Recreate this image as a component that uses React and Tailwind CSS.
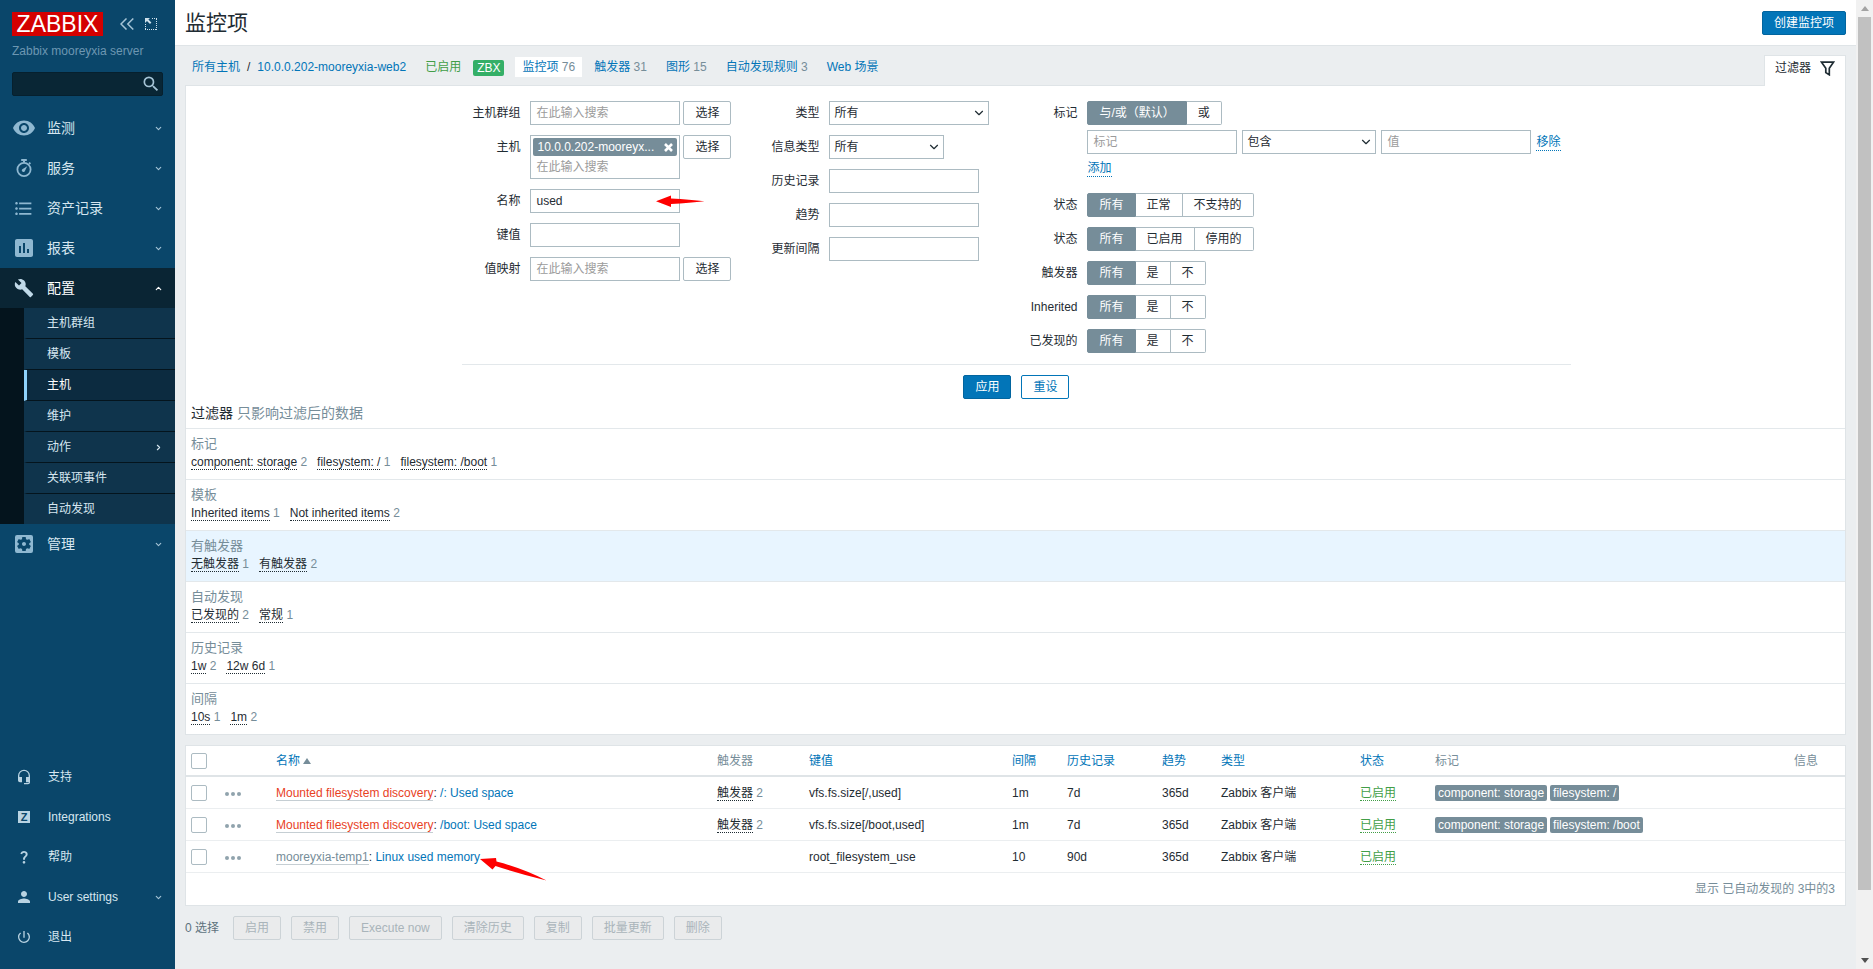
import { useId } from "react";
import { ChevronDown, ChevronRight, ChevronUp } from "lucide-react";
import {
    MdAssessment,
    MdBuild,
    MdFormatListBulleted,
    MdHeadsetMic,
    MdPerson,
    MdPowerSettingsNew,
    MdQuestionMark,
    MdRemoveRedEye,
    MdSearch,
    MdSettingsApplications,
} from "react-icons/md";

const StopwatchIcon = () => (
    <svg width="16" height="18" viewBox="0 0 16 18" fill="none" stroke="currentColor">
        <circle cx="8" cy="10.5" r="6.6" strokeWidth="1.8" />
        <path d="M5.2 1h5.6M8 1v2.5" strokeWidth="2" />
        <path d="M13 3.6l1.4 1.4" strokeWidth="1.8" />
        <path d="M11.2 7.2L8.9 12a1.6 1.6 0 1 1-2.2-2z" fill="currentColor" stroke="none" />
    </svg>
);

const CollapseIcon = () => (
    <svg width="14" height="12" viewBox="0 0 14 12" fill="none" stroke="currentColor" strokeWidth="1.5">
        <path d="M6.5 0.5L1 6l5.5 5.5M13.3 0.5L7.8 6l5.5 5.5" />
    </svg>
);

const KioskIcon = () => (
    <svg width="12" height="12" viewBox="0 0 12 12" fill="none" stroke="currentColor">
        <path d="M7 0.5h5M11.5 1v11M11 11.5H0M0.5 11V6" strokeDasharray="1 1" />
        <path d="M0 0h5L3.4 1.6 6.4 4.6 5 6 2 3 0 5z" fill="currentColor" stroke="none" />
    </svg>
);

const FunnelIcon = () => (
    <svg width="15" height="15" viewBox="0 0 15 15" fill="none" stroke="#1f2c33" strokeWidth="1.7">
        <path d="M1.5 1.2h12L9.3 7.2v6.6L5.8 11.6V7.2z" />
    </svg>
);

const menu = [
    { label: "监测", icon: <MdRemoveRedEye size={24} /> },
    { label: "服务", icon: <StopwatchIcon /> },
    { label: "资产记录", icon: <MdFormatListBulleted size={21} /> },
    { label: "报表", icon: <MdAssessment size={24} /> },
    {
        label: "配置",
        icon: <MdBuild size={20} />,
        children: ["主机群组", "模板", "主机", "维护", "动作", "关联项事件", "自动发现"],
    },
    { label: "管理", icon: <MdSettingsApplications size={24} /> },
];

const userMenu = [
    { label: "支持", icon: <MdHeadsetMic size={16} /> },
    {
        label: "Integrations",
        icon: (
            <span className="w-3 h-3 bg-[#b9d3e2] text-[#0a466a] text-[11px] leading-3 font-bold text-center">Z</span>
        ),
    },
    { label: "帮助", icon: <MdQuestionMark size={16} /> },
    { label: "User settings", icon: <MdPerson size={18} />, arrow: true },
    { label: "退出", icon: <MdPowerSettingsNew size={16} /> },
];

const tabs = [
    { label: "监控项", count: 76, active: true },
    { label: "触发器", count: 31 },
    { label: "图形", count: 15 },
    { label: "自动发现规则", count: 3 },
    { label: "Web 场景" },
];

const subfilters = [
    { title: "标记", items: [["component: storage", 2], ["filesystem: /", 1], ["filesystem: /boot", 1]] },
    { title: "模板", items: [["Inherited items", 1], ["Not inherited items", 2]] },
    { title: "有触发器", items: [["无触发器", 1], ["有触发器", 2]], hover: true },
    { title: "自动发现", items: [["已发现的", 2], ["常规", 1]] },
    { title: "历史记录", items: [["1w", 2], ["12w 6d", 1]] },
    { title: "间隔", items: [["10s", 1], ["1m", 2]] },
];

const rows = [
    {
        parent: "Mounted filesystem discovery",
        name: "/: Used space",
        triggers: 2,
        itemKey: "vfs.fs.size[/,used]",
        interval: "1m",
        history: "7d",
        tags: ["component: storage", "filesystem: /"],
    },
    {
        parent: "Mounted filesystem discovery",
        name: "/boot: Used space",
        triggers: 2,
        itemKey: "vfs.fs.size[/boot,used]",
        interval: "1m",
        history: "7d",
        tags: ["component: storage", "filesystem: /boot"],
    },
    {
        parent: "mooreyxia-temp1",
        template: true,
        name: "Linux used memory",
        itemKey: "root_filesystem_use",
        interval: "10",
        history: "90d",
        tags: [],
    },
];

const Sidebar = () => (
    <aside className="w-[175px] shrink-0 min-h-screen bg-[#0a466a] flex flex-col">
        <div className="px-3 pt-3">
            <div className="flex items-center">
                <a href="#" className="w-[91px] h-6 bg-[#d40000] text-white text-[23px] leading-6 text-center">
                    ZABBIX
                </a>
                <button type="button" aria-label="Collapse" className="ml-[17px] text-[#a5c4d6]">
                    <CollapseIcon />
                </button>
                <button type="button" aria-label="Kiosk mode" className="ml-[11px] text-[#cfe1ec]">
                    <KioskIcon />
                </button>
            </div>
            <div className="mt-1.5 leading-[18px] text-[#6d97b2] whitespace-nowrap">Zabbix mooreyxia server</div>
            <form className="relative mt-3">
                <input
                    type="text"
                    aria-label="Search"
                    className="w-full h-6 pl-2 pr-7 rounded-xs bg-[#092635] border border-[#06202e] text-white"
                />
                <button type="button" aria-label="Search" className="absolute right-0.5 top-0.5 text-[#a5c4d6]">
                    <MdSearch size={20} />
                </button>
            </form>
        </div>

        <nav className="mt-3 text-sm text-[#d6e6f0]">
            {menu.map((item) => (
                <div key={item.label}>
                    <a
                        href="#"
                        className={`flex items-center h-10 pr-3 ${item.children ? "bg-[#0a2534] text-white" : ""}`}
                    >
                        <span
                            className={`w-[47px] flex justify-center items-center ${
                                item.children ? "text-[#c0d9e8]" : "text-[#8fb8d1]"
                            }`}
                        >
                            {item.icon}
                        </span>
                        <span className="flex-1">{item.label}</span>
                        {item.children ? (
                            <ChevronUp size={9} strokeWidth={3} />
                        ) : (
                            <ChevronDown size={9} strokeWidth={3} className="text-[#a5c4d6]" />
                        )}
                    </a>
                    {item.children && (
                        <div className="pl-6 bg-[#04141d] text-xs divide-y divide-[#04141d]">
                            {item.children.map((child) => (
                                <a
                                    key={child}
                                    href="#"
                                    className={`flex items-center justify-between box-content h-[30px] pr-3 border-l-[3px] pl-5 ${
                                        child === "主机"
                                            ? "bg-[#0c2b40] border-l-[#8fd2fb] text-white"
                                            : "bg-[#0f344c] border-l-[#0f344c]"
                                    }`}
                                >
                                    {child}
                                    {child === "动作" && <ChevronRight size={9} strokeWidth={3} />}
                                </a>
                            ))}
                        </div>
                    )}
                </div>
            ))}
        </nav>

        <nav className="mt-auto pb-3 text-[#d6e6f0]">
            {userMenu.map((item) => (
                <a key={item.label} href="#" className="flex items-center h-10 pr-3">
                    <span className="w-12 flex justify-center items-center text-[#b9d3e2]">{item.icon}</span>
                    <span className="flex-1">{item.label}</span>
                    {item.arrow && <ChevronDown size={9} strokeWidth={3} className="text-[#a5c4d6]" />}
                </a>
            ))}
        </nav>
    </aside>
);

const Field = ({ label, id, children }) => (
    <div className="flex gap-2.5">
        <label htmlFor={id} className="w-12 h-6 leading-6 shrink-0 flex justify-end whitespace-nowrap">
            {label}
        </label>
        {children}
    </div>
);

const TextBox = ({ id, placeholder, value, label }) => (
    <input
        id={id}
        type="text"
        aria-label={label}
        placeholder={placeholder}
        defaultValue={value}
        className="w-[150px] h-6 px-[5px] bg-white border border-[#acbbc2] placeholder:text-[#9b9b9b]"
    />
);

const SelectBox = ({ id, value, width, label }) => (
    <div className={`relative ${width}`}>
        <select
            id={id}
            aria-label={label}
            defaultValue={value}
            className="appearance-none w-full h-6 pl-1 pr-5 bg-white border border-[#acbbc2]"
        >
            <option>{value}</option>
        </select>
        <ChevronDown size={14} className="absolute right-[3px] top-[5px] pointer-events-none text-[#1f2c33]" />
    </div>
);

const PickButton = () => (
    <button type="button" className="ml-[3px] w-12 h-6 bg-white border border-[#acbbc2] rounded-xs">
        选择
    </button>
);

const PickField = ({ label }) => {
    const id = useId();
    return (
        <Field label={label} id={id}>
            <div className="flex">
                <TextBox id={id} placeholder="在此输入搜索" />
                <PickButton />
            </div>
        </Field>
    );
};

const TextField = ({ label, value }) => {
    const id = useId();
    return (
        <Field label={label} id={id}>
            <TextBox id={id} value={value} />
        </Field>
    );
};

const SelectField = ({ label, width }) => {
    const id = useId();
    return (
        <Field label={label} id={id}>
            <SelectBox id={id} value="所有" width={width} />
        </Field>
    );
};

const Segmented = ({ label, options }) => {
    const name = useId();
    return (
        <div role="radiogroup" aria-label={label} className="flex h-6">
            {options.map((option, i) => (
                <label
                    key={option}
                    className="relative px-[11px] leading-[22px] bg-white border border-l-0 border-[#acbbc2] first:border-l first:rounded-l-xs last:rounded-r-xs has-checked:bg-[#768d99] has-checked:border-[#768d99] has-checked:text-white"
                >
                    <input type="radio" name={name} defaultChecked={i === 0} className="sr-only" />
                    {option}
                </label>
            ))}
        </div>
    );
};

const RadioField = ({ label, options }) => (
    <div className="flex gap-2.5">
        <span className="w-12 h-6 leading-6 shrink-0 flex justify-end whitespace-nowrap">{label}</span>
        <Segmented label={label} options={options} />
    </div>
);

const dotted = "border-b border-dotted";

const Filter = () => (
    <section className="bg-white border border-[#dfe4e7] pt-[15px]">
        <form>
            <div className="w-fit mx-auto pl-0.5">
                <div className="flex items-start gap-10 px-2.5 pb-[11px]">
                    <div className="flex flex-col gap-2.5">
                        <PickField label="主机群组" />
                        <Field label="主机" id="host">
                            <div className="flex items-start">
                                <div className="w-[150px] border border-[#acbbc2] bg-white px-0.5 pt-0.5">
                                    <div className="flex items-center justify-between h-[18px] px-1 rounded-xs bg-[#768d99] text-white">
                                        <span className="leading-[18px]">10.0.0.202-mooreyx...</span>
                                        <button type="button" aria-label="Remove host">
                                            <svg width="9" height="9" viewBox="0 0 9 9" stroke="#fff" strokeWidth="2.6">
                                                <path d="M1 1l7 7M8 1L1 8" />
                                            </svg>
                                        </button>
                                    </div>
                                    <input
                                        id="host"
                                        type="text"
                                        placeholder="在此输入搜索"
                                        className="block w-full h-[22px] px-[3px] placeholder:text-[#9b9b9b]"
                                    />
                                </div>
                                <PickButton />
                            </div>
                        </Field>
                        <div className="relative">
                            <TextField label="名称" value="used" />
                            <svg
                                className="absolute left-[184px] top-1.5"
                                width="49"
                                height="12"
                                viewBox="0 0 49 12"
                                fill="#fe0000"
                            >
                                <path d="M0 6.2L15 0.5V3.5Q34 4.5 48.500 6.200Q34 8 15 9V12z" />
                            </svg>
                        </div>
                        <TextField label="键值" />
                        <PickField label="值映射" />
                    </div>

                    <div className="flex flex-col gap-2.5">
                        <SelectField label="类型" width="w-40" />
                        <SelectField label="信息类型" width="w-[115px]" />
                        <TextField label="历史记录" />
                        <TextField label="趋势" />
                        <TextField label="更新间隔" />
                    </div>

                    <div className="flex flex-col gap-2.5">
                        <div className="flex gap-2.5">
                            <span className="w-12 leading-6 text-right">标记</span>
                            <div>
                                <Segmented label="标记" options={["与/或（默认）", "或"]} />
                                <div className="flex items-center gap-[5px] mt-[5px]">
                                    <TextBox label="标记" placeholder="标记" />
                                    <SelectBox label="Operator" value="包含" width="w-[134px]" />
                                    <TextBox label="值" placeholder="值" />
                                    <button type="button" className={`text-[#0275b8] leading-4 ${dotted}`}>
                                        移除
                                    </button>
                                </div>
                                <button type="button" className={`block my-1.5 text-[#0275b8] leading-4 ${dotted}`}>
                                    添加
                                </button>
                            </div>
                        </div>
                        <RadioField label="状态" options={["所有", "正常", "不支持的"]} />
                        <RadioField label="状态" options={["所有", "已启用", "停用的"]} />
                        <RadioField label="触发器" options={["所有", "是", "不"]} />
                        <RadioField label="Inherited" options={["所有", "是", "不"]} />
                        <RadioField label="已发现的" options={["所有", "是", "不"]} />
                    </div>
                </div>
                <div className="flex justify-center gap-2.5 pt-2.5 border-t border-[#e3e8eb]">
                    <button type="button" className="w-12 h-6 rounded-xs bg-[#0275b8] border border-[#02659f] text-white">
                        应用
                    </button>
                    <button type="button" className="w-12 h-6 rounded-xs bg-white border border-[#0275b8] text-[#0275b8]">
                        重设
                    </button>
                </div>
            </div>
        </form>

        <h2 className="px-[5px] py-[5px] text-sm leading-[19px]">
            过滤器 <span className="text-[#768d99]">只影响过滤后的数据</span>
        </h2>
        {subfilters.map((group) => (
            <div
                key={group.title}
                className={`px-[5px] pt-[5px] pb-2 border-t border-[#e3e8eb] ${group.hover ? "bg-[#e8f5ff]" : ""}`}
            >
                <h3 className="text-[13px] leading-[19px] text-[#768d99]">{group.title}</h3>
                <div className="flex gap-2.5 leading-[18px]">
                    {group.items.map(([label, count]) => (
                        <span key={label} className="text-[#768d99]">
                            <a href="#" className={`text-[#1f2c33] ${dotted} border-[#1f2c33]`}>{label}</a> {count}
                        </span>
                    ))}
                </div>
            </div>
        ))}
    </section>
);

const Check = ({ label }) => (
    <input
        type="checkbox"
        aria-label={label}
        className="appearance-none block w-4 h-4 bg-white border border-[#acbbc2] rounded-xs"
    />
);

const th = "h-[31px] px-[5px] text-left font-normal border-b-2 border-[#dfe4e7]";
const td = "h-8 px-[5px] border-b border-[#ebeef0]";

const Items = () => (
    <section className="mt-2.5 bg-white border border-[#dfe4e7]">
        <table className="w-full table-fixed border-separate border-spacing-0 whitespace-nowrap">
            <colgroup>
                <col className="w-[34px]" />
                <col className="w-[51px]" />
                <col />
                <col className="w-[92px]" />
                <col className="w-[203px]" />
                <col className="w-[55px]" />
                <col className="w-[95px]" />
                <col className="w-[59px]" />
                <col className="w-[139px]" />
                <col className="w-[75px]" />
                <col className="w-[359px]" />
                <col className="w-14" />
            </colgroup>
            <thead className="text-[#768d99]">
                <tr>
                    <th className={th}><Check label="Select all" /></th>
                    <th className={th}></th>
                    <th className={th}>
                        <a href="#" className="text-[#0275b8]">名称</a>
                        <svg className="inline ml-[3px]" width="8" height="6" viewBox="0 0 8 6" fill="#768d99">
                            <path d="M4 0l4 6H0z" />
                        </svg>
                    </th>
                    <th className={th}>触发器</th>
                    {["键值", "间隔", "历史记录", "趋势", "类型", "状态"].map((name) => (
                        <th key={name} className={th}>
                            <a href="#" className="text-[#0275b8]">{name}</a>
                        </th>
                    ))}
                    <th className={th}>标记</th>
                    <th className={th}>信息</th>
                </tr>
            </thead>
            <tbody>
                {rows.map((row) => (
                    <tr key={row.itemKey}>
                        <td className={td}><Check label={row.name} /></td>
                        <td className={td}>
                            <button type="button" aria-label="More" className="block pt-[3px] text-[#90a3ad]">
                                <svg width="16" height="4" viewBox="0 0 16 4" fill="currentColor">
                                    <circle cx="2" cy="2" r="2" />
                                    <circle cx="8" cy="2" r="2" />
                                    <circle cx="14" cy="2" r="2" />
                                </svg>
                            </button>
                        </td>
                        <td className={td}>
                            <span className="relative">
                                <a
                                    href="#"
                                    className={`border-b border-[#c5ced3] ${row.template ? "text-[#768d99]" : "text-[#e8421f]"}`}
                                >
                                    {row.parent}
                                </a>
                                {": "}
                                <a href="#" className="text-[#0275b8]">{row.name}</a>
                                {row.template && (
                                    <svg
                                        className="absolute left-full top-2 overflow-visible"
                                        width="67"
                                        height="24"
                                        viewBox="0 0 67 24"
                                        fill="#fe0000"
                                    >
                                        <path d="M0 1L16 0L16.500 3.600Q42 10 66.500 22.500Q40 16 15.500 8L12.500 11.500z" />
                                    </svg>
                                )}
                            </span>
                        </td>
                        <td className={`${td} text-[#768d99]`}>
                            {row.triggers && (
                                <>
                                    <a href="#" className={`text-[#1f2c33] ${dotted} border-[#1f2c33]`}>触发器</a> {row.triggers}
                                </>
                            )}
                        </td>
                        <td className={td}>{row.itemKey}</td>
                        <td className={td}>{row.interval}</td>
                        <td className={td}>{row.history}</td>
                        <td className={td}>365d</td>
                        <td className={td}>Zabbix 客户端</td>
                        <td className={td}>
                            <a href="#" className={`text-[#429e47] ${dotted}`}>已启用</a>
                        </td>
                        <td className={td}>
                            <div className="flex gap-[3px]">
                                {row.tags.map((tag) => (
                                    <span key={tag} className="px-[3px] leading-4 rounded-xs bg-[#768d99] text-white">
                                        {tag}
                                    </span>
                                ))}
                            </div>
                        </td>
                        <td className={td}></td>
                    </tr>
                ))}
            </tbody>
        </table>
        <div className="px-2.5 leading-8 text-right text-[#768d99]">显示 已自动发现的 3中的3</div>
    </section>
);

const App = () => {
    return (
        <div className="flex min-h-screen bg-[#ebeef0] text-xs text-[#1f2c33] font-['Liberation_Sans','Noto_Sans_CJK_SC',sans-serif]">
            <Sidebar />

            <main className="flex-1 min-w-0">
                <header className="flex items-center justify-between h-[46px] px-2.5 pt-px bg-white border-b border-[#dfe4e7]">
                    <h1 className="text-[21px] leading-7">监控项</h1>
                    <button type="button" className="h-6 px-[11px] rounded-xs bg-[#0275b8] border border-[#02659f] text-white">
                        创建监控项
                    </button>
                </header>

                <div className="px-2.5">
                    <div className="flex justify-between pt-[9px]">
                        <nav className="flex items-center gap-[5px] h-5 mt-0.5 leading-5">
                            <a href="#" className="pl-[7px] text-[#0275b8]">所有主机</a>
                            <span className="pl-0.5">/</span>
                            <a href="#" className="pl-0.5 pr-[7px] text-[#0275b8]">10.0.0.202-mooreyxia-web2</a>
                            <span className="px-[7px] text-[#429e47]">已启用</span>
                            <span className="px-1 mr-1.5 mt-0.5 leading-4 rounded-xs bg-[#34af67] text-white">ZBX</span>
                            {tabs.map((tab) => (
                                <span
                                    key={tab.label}
                                    className={`px-[7px] text-[#768d99] ${tab.active ? "bg-white" : ""}`}
                                >
                                    <a href="#" className="text-[#0275b8]">{tab.label}</a> {tab.count}
                                </span>
                            ))}
                        </nav>
                        <button
                            type="button"
                            className="relative flex items-center gap-[9px] h-[31px] -mb-px px-2.5 pb-1.5 bg-white border border-b-0 border-[#dfe4e7]"
                        >
                            过滤器
                            <FunnelIcon />
                        </button>
                    </div>
                    <Filter />
                    <Items />
                    <div className="flex items-center gap-2.5 mt-2.5">
                        <span className="mr-1 text-[#5d727d]">0 选择</span>
                        {["启用", "禁用", "Execute now", "清除历史", "复制", "批量更新", "删除"].map((action) => (
                            <button
                                key={action}
                                type="button"
                                disabled
                                className="h-6 px-[11px] rounded-xs bg-[#eaebec] border border-[#ccd3d7] text-[#a9b4ba]"
                            >
                                {action}
                            </button>
                        ))}
                    </div>
                </div>
            </main>

            {/* Page scrollbar */}
            <div className="w-[17px] shrink-0 flex flex-col items-center bg-[#f1f1f1]">
                <svg className="my-1.5" width="8" height="5" viewBox="0 0 8 5" fill="#a3a3a3">
                    <path d="M4 0l4 5H0z" />
                </svg>
                <div className="w-[13px] flex-14 bg-[#c1c1c1]"></div>
                <div className="flex-1"></div>
                <svg className="my-1.5" width="8" height="5" viewBox="0 0 8 5" fill="#505050">
                    <path d="M0 0h8L4 5z" />
                </svg>
            </div>
        </div>
    );
};

export default App;
